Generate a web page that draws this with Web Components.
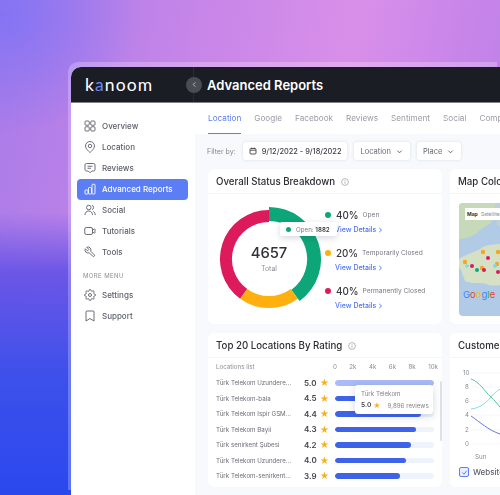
<!DOCTYPE html>
<html><head><meta charset="utf-8">
<style>
html,body{margin:0;padding:0;width:500px;height:495px;overflow:hidden}
body{font-family:Inter,"Liberation Sans",sans-serif;background:
 linear-gradient(180deg,rgba(100,80,230,0) 212px,rgba(104,84,230,.95) 272px,#3d50ea 375px,#2b48ee 495px),
 radial-gradient(140px 120px at 0px 15px,#8374f4 0%,rgba(131,116,244,0) 100%),
 linear-gradient(102deg,#a87be8 0%,#c886e8 35%,#d88fe9 60%,#c684e9 80%,#b27fe8 100%);
 padding:67px 0 0 71px;box-sizing:border-box}
</style></head><body>
<template id="t-nav">
<style>
:host{display:flex;align-items:center;gap:6px;height:21px;padding:0 7px;border-radius:4px;font-size:8px;color:#5b5f68;font-weight:500;white-space:nowrap}
:host([active]){background:#5c7ef5;color:#fff}
::slotted(svg){width:12px;height:12px;flex:none}
</style><slot name="icon"></slot><span><slot></slot></span>
</template>
<template id="t-shell">
<style>
:host{display:block;width:429px;height:428px;border-radius:10px 0 0 0;background:#fff;box-shadow:-3px -5px 0 0 rgba(255,255,255,.24);overflow:hidden;filter:blur(.4px)}
.top{height:36px;background:#1b1d24;display:flex;align-items:center;color:#fff;box-sizing:border-box;border-bottom:1px solid #7d8085}
.logo{width:123px;height:100%;display:flex;align-items:center;padding-left:14px;box-sizing:border-box;font-size:17.500px;letter-spacing:1.100px;font-family:Lato,sans-serif;border-right:1px solid #2a2c33}
.logo b{font-weight:400;color:#6a88f8}
.back{width:16px;height:16px;margin-left:-8px;position:relative;border-radius:50%;background:#4a4c53;display:flex;align-items:center;justify-content:center;margin-right:5px}
.title{font-size:13px;font-weight:600}
.body{display:flex;height:392px}
nav{width:124px;flex:none;padding:12.5px 7px 0 6px;box-sizing:border-box;display:flex;flex-direction:column}
.more{font-size:6px;line-height:9px;letter-spacing:.4px;color:#8a8d95;padding:8px 6px 4.5px}
main{flex:1;background:#f7f9fc;min-width:0}
</style>
<div class="top"><div class="logo"><span>k<b>a</b>noom</span></div><div class="back"><svg width="7" height="7" viewBox="0 0 8 8" fill="none" stroke="#b9babd" stroke-width="1.1"><path d="M5 1.500 2.500 4 5 6.500"/></svg></div><div class="title">Advanced Reports</div></div>
<div class="body"><nav><slot name="nav"></slot><div class="more">MORE MENU</div><slot name="more"></slot></nav><main><slot></slot></main></div>
</template>
<template id="t-tabs">
<style>
:host{display:flex;height:30.500px;background:#fff;gap:13px;padding-left:13px;font-size:8.200px;color:#9a9ca4;white-space:nowrap;overflow:hidden}
span{display:flex;align-items:center;box-sizing:border-box;height:30.500px}
span.on{color:#5c7ef5;border-bottom:1.500px solid #5c7ef5}
</style><span class="on">Location</span><span>Google</span><span>Facebook</span><span>Reviews</span><span>Sentiment</span><span>Social</span><span>Competitors</span>
</template>
<template id="t-filter">
<style>
:host{display:flex;align-items:center;gap:7px;height:35.500px;padding-left:12px;font-size:7px;color:#85888f;white-space:nowrap}
.b{display:flex;align-items:center;gap:5px;height:18px;background:#fff;border-radius:3px;box-shadow:0 0 3px rgba(30,40,80,.14);padding:0 7px 0 6px;color:#686b73;font-size:7.500px}
.d{color:#3d4048;font-weight:500;font-size:7.400px;padding-right:6px}
</style>
<span>Filter by:</span>
<div class="b d"><svg width="8" height="8" viewBox="0 0 8 8" fill="none" stroke="#444" stroke-width=".9"><rect x="1" y="1.500" width="6" height="5.500" rx="1"/><path d="M1 3.200h6M2.700.6v1.400M5.300.6v1.400"/></svg>9/12/2022 - 9/18/2022</div>
<div class="b">Location<svg width="7" height="7" viewBox="0 0 8 8" fill="none" stroke="#555" stroke-width="1"><path d="M1.500 3 4 5.500 6.500 3"/></svg></div>
<div class="b">Place<svg width="7" height="7" viewBox="0 0 8 8" fill="none" stroke="#555" stroke-width="1"><path d="M1.500 3 4 5.500 6.500 3"/></svg></div>
</template>
<template id="t-card">
<style>
:host{display:block;width:234px;background:#fff;border-radius:6px;flex:none;overflow:hidden}
.h{height:25px;padding-top:1px;display:flex;align-items:center;gap:6px;padding-left:8px;font-size:9.700px;font-weight:500;color:#2b2d33;white-space:nowrap;border-bottom:1px solid #f3f5f8;box-sizing:border-box}
</style>
<div class="h"><slot name="title"></slot><slot name="info"></slot></div><slot></slot>
</template>
<template id="t-donut">
<style>
:host{display:flex;height:130px;position:relative;font-size:6.600px;color:#75787f;padding-left:6px;gap:1px;box-sizing:border-box}
.w{position:relative;width:110px;height:110px;margin-top:10px;flex:none}
svg.d{display:block}
.c{position:absolute;inset:0;display:flex;flex-direction:column;align-items:center;justify-content:center}
.n{font-size:14.800px;line-height:17px;color:#30323a;font-weight:500}
.t{font-size:7px;line-height:9px;color:#8d9098;margin-top:2px}
.ls{padding-top:14px}
.l{height:38px;white-space:nowrap}
.r{display:flex;align-items:center;height:14px}
.dot{width:6px;height:6px;border-radius:50%;flex:none}
.p{font-size:9.800px;font-weight:500;color:#35373e;margin:0 4px 0 5px}
.v{display:flex;align-items:center;gap:2px;color:#4f72ef;font-size:7px;font-weight:500;height:14px;padding-left:10px;margin-top:.5px}
.tip{position:absolute;left:72px;top:28px;height:14px;width:57px;background:#fff;box-shadow:0 2px 6px rgba(30,40,80,.18);border-radius:2px;display:flex;align-items:center;gap:3px;padding-left:6px;box-sizing:border-box;font-size:6.200px;white-space:nowrap}
.tip b{font-weight:600;color:#44464e}
</style>
<div class="w"><svg class="d" width="110" height="110" viewBox="0 0 110 110">
<path d="M55 12A43 43 0 0 0 29.700 89.800" fill="none" stroke="#dd1a5b" stroke-width="12"/>
<path d="M29.700 89.800A43 43 0 0 0 80.300 89.800" fill="none" stroke="#ffaf0e" stroke-width="12"/>
<path d="M55 3A52 52 0 0 1 85.600 97.100L77.400 85.800A38 38 0 0 0 55 17Z" fill="#0da678"/>
</svg>
<div class="c"><div class="n">4657</div><div class="t">Total</div></div></div>
<div class="ls">
<div class="l"><div class="r"><i class="dot" style="background:#0da678"></i><span class="p">40%</span><span>Open</span></div><div class="v">View Details<svg width="5" height="6" viewBox="0 0 5 6" fill="none" stroke="#4f72ef" stroke-width=".9"><path d="M1.200.8 3.500 3 1.200 5.200"/></svg></div></div>
<div class="l"><div class="r"><i class="dot" style="background:#ffaf0e"></i><span class="p">20%</span><span>Temporarily Closed</span></div><div class="v">View Details<svg width="5" height="6" viewBox="0 0 5 6" fill="none" stroke="#4f72ef" stroke-width=".9"><path d="M1.200.8 3.500 3 1.200 5.200"/></svg></div></div>
<div class="l"><div class="r"><i class="dot" style="background:#dd1a5b"></i><span class="p">40%</span><span>Permanently Closed</span></div><div class="v">View Details<svg width="5" height="6" viewBox="0 0 5 6" fill="none" stroke="#4f72ef" stroke-width=".9"><path d="M1.200.8 3.500 3 1.200 5.200"/></svg></div></div>
</div>
<div class="tip"><i class="dot" style="background:#0da678;width:5px;height:5px;margin-right:2px"></i><span>Open: <b>1882</b></span></div>
</template>
<template id="t-rank">
<style>
:host{display:block;position:relative;height:129px;font-size:6.200px;color:#6b6e76;padding-left:8px;box-sizing:border-box}
.row{display:grid;grid-template-columns:88px 14px 17px 99px;align-items:center;height:15.500px;white-space:nowrap}
.hd{height:17px;display:grid;grid-template-columns:117px 105px;align-items:center;color:#8a8d95;font-size:6.200px}
.ax{display:flex;justify-content:space-between}
.s{font-size:8px;font-weight:600;color:#44464e}
.st{color:#f6b01e;font-size:9px;line-height:1;text-align:center;padding-right:4px}
.bar{height:5.500px;background:#eff3fc;border-radius:3px;overflow:hidden}
.bar i{display:block;height:100%;background:#3f63e6;border-radius:3px}
.tip{position:absolute;left:147px;top:27px;width:78px;height:29px;background:#fff;box-shadow:0 2px 8px rgba(30,40,80,.18);border-radius:3px;padding:5px 6px;box-sizing:border-box;color:#80838b;font-size:6.200px;white-space:nowrap}
.tip div{display:flex;align-items:center;gap:2px;margin-top:4px}
.sb{position:absolute;right:0;top:23px;width:2px;height:60px;background:#dde1e8;border-radius:1px}
</style>
<div class="hd"><span>Locations list</span><div class="ax"><span>0</span><span>2k</span><span>4k</span><span>6k</span><span>8k</span><span>10k</span></div></div>
<div class="row"><span>Türk Telekom Uzundere...</span><span class="s">5.0</span><span class="st">★</span><div class="bar"><i style="width:100%;background:#a9baf6"></i></div></div>
<div class="row"><span>Türk Telekom-bala</span><span class="s">4.5</span><span class="st">★</span><div class="bar"><i style="width:92%"></i></div></div>
<div class="row"><span>Türk Telekom Ispir GSM...</span><span class="s">4.4</span><span class="st">★</span><div class="bar"><i style="width:87%"></i></div></div>
<div class="row"><span>Türk Telekom Bayii</span><span class="s">4.3</span><span class="st">★</span><div class="bar"><i style="width:82%"></i></div></div>
<div class="row"><span>Türk senirkent Şubesi</span><span class="s">4.2</span><span class="st">★</span><div class="bar"><i style="width:77%"></i></div></div>
<div class="row"><span>Türk Telekom Uzundere...</span><span class="s">4.0</span><span class="st">★</span><div class="bar"><i style="width:72%"></i></div></div>
<div class="row"><span>Türk Telekom-senirkent...</span><span class="s">3.9</span><span class="st">★</span><div class="bar"><i style="width:66%"></i></div></div>
<div class="sb"></div>
<div class="tip">Türk Telekom<div><span class="s" style="font-size:6.600px">5.0</span><span class="st" style="font-size:7px;padding:0">★</span><span style="margin-left:5px">9,896 reviews</span></div></div>
</template>
<template id="t-map">
<style>
:host{display:block;height:130px;padding:9px 0 0 9px;box-sizing:border-box}
svg{display:block;border-radius:4px}
text{font-family:Inter,sans-serif}
</style>
<svg width="60" height="113" viewBox="0 0 60 113">
<rect width="60" height="113" fill="#b1cbe6"/>
<path d="M0 0H36V14C32 22 24 24 20 28 14 34 6 36 0 36Z" fill="#c6d9b8"/>
<path d="M36 0H60V26C52 28 44 26 38 22Z" fill="#bfd0d8"/>
<path d="M0 56C8 50 16 50 24 44 34 40 46 42 60 40V78C48 80 38 84 30 82 22 78 14 82 6 78 4 72 2 66 0 64Z" fill="#d6e0c4"/>
<rect x="6" y="5" width="54" height="12" fill="#fff"/>
<text x="8" y="13" font-size="5" font-weight="700" fill="#333">Map</text>
<text x="22" y="13" font-size="5" fill="#8a8a8a">Satellite</text>
<g fill="#f5a623"><circle cx="24" cy="49" r="2.200"/><circle cx="39" cy="49" r="2.200"/><circle cx="6" cy="59" r="2.200"/><circle cx="23" cy="65" r="2.200"/><circle cx="38" cy="61" r="2.200"/></g>
<g fill="#d81b60"><circle cx="29" cy="55" r="2"/><circle cx="13" cy="63" r="2"/><circle cx="25" cy="67" r="2"/><circle cx="39" cy="69" r="2"/></g>
<circle cx="18" cy="67" r="2" fill="#0da678"/><circle cx="36" cy="63" r="2" fill="#7fd8e8"/><circle cx="8" cy="63" r="1.800" fill="#7fd8e8"/>
<text x="4" y="95" font-size="9.500" font-family="Liberation Sans"><tspan fill="#4285f4">G</tspan><tspan fill="#ea4335">o</tspan><tspan fill="#fbbc05">o</tspan><tspan fill="#4285f4">g</tspan><tspan fill="#34a853">l</tspan><tspan fill="#ea4335">e</tspan></text>
</svg>
</template>
<template id="t-line">
<style>
:host{display:block;height:129px;font-size:6.200px;color:#8a8d95}
svg{display:block}
text{font-family:Inter,sans-serif;font-size:6.200px;fill:#8a8d95}
.k{display:flex;align-items:center;gap:4px;padding:2px 0 0 9px;color:#5d6068;font-size:8px;font-weight:500;white-space:nowrap}
.c{width:10px;height:10px;border:1px solid #5c7ef5;border-radius:2px;background:#e8edff;box-sizing:border-box;display:flex;align-items:center;justify-content:center;flex:none}
</style>
<svg width="60" height="107" viewBox="0 0 60 107">
<text x="13" y="17">10</text><text x="15" y="31">8</text><text x="15" y="45">6</text><text x="15" y="59">4</text><text x="15" y="74">2</text><text x="15" y="88">0</text>
<path stroke="#f0f2f6" stroke-width=".7" d="M22 15H60M22 29H60M22 43H60M22 57H60M22 72H60M22 86H60"/>
<path d="M21 21C30 24 34 33 41 39S52 54 60 58" fill="none" stroke="#57c7a0" stroke-width="1"/>
<path d="M21 51C30 50 36 45 41 39S50 30 60 28" fill="none" stroke="#79dde0" stroke-width="1"/>
<path d="M21 58C30 64 38 72 50 76S56 78 60 78" fill="none" stroke="#6277ea" stroke-width="1"/>
<text x="25" y="101">Sun</text>
</svg>
<div class="k"><div class="c"><svg width="7" height="7" viewBox="0 0 8 8" fill="none" stroke="#5c7ef5" stroke-width="1.100"><path d="M1.500 4 3.400 6 6.500 2"/></svg></div>Website</div>
</template>
<kn-shell>
<kn-nav slot="nav"><svg slot="icon" viewBox="0 0 24 24" fill="none" stroke="#5b5f68" stroke-width="1.800"><rect x="2" y="2" width="8.500" height="8.500" rx="2"/><rect x="13.500" y="2" width="8.500" height="8.500" rx="2"/><rect x="2" y="13.500" width="8.500" height="8.500" rx="2"/><rect x="13.500" y="13.500" width="8.500" height="8.500" rx="2"/></svg>Overview</kn-nav>
<kn-nav slot="nav"><svg slot="icon" viewBox="0 0 24 24" fill="none" stroke="#5b5f68" stroke-width="1.800"><path d="M12 23S3 16 3 10a9 9 0 0 1 18 0c0 6-9 13-9 13Z"/><circle cx="12" cy="10" r="3.500"/></svg>Location</kn-nav>
<kn-nav slot="nav"><svg slot="icon" viewBox="0 0 24 24" fill="none" stroke="#5b5f68" stroke-width="1.800"><path d="M5 3h14a3 3 0 0 1 3 3v9a3 3 0 0 1-3 3h-3.500L12 21.500 8.500 18H5a3 3 0 0 1-3-3V6a3 3 0 0 1 3-3Z"/><path d="M7 8.500h10M7 12.500h7"/></svg>Reviews</kn-nav>
<kn-nav slot="nav" active><svg slot="icon" viewBox="0 0 24 24" fill="none" stroke="#fff" stroke-width="1.800"><rect x="2" y="14" width="6" height="8" rx="1.500"/><rect x="9" y="9" width="6" height="13" rx="1.500"/><rect x="16" y="2.500" width="6" height="19.500" rx="1.500"/></svg>Advanced Reports</kn-nav>
<kn-nav slot="nav"><svg slot="icon" viewBox="0 0 24 24" fill="none" stroke="#5b5f68" stroke-width="1.800"><circle cx="9.500" cy="7" r="4.500"/><path d="M2 22c0-5 3-8 7.500-8s7.500 3 7.500 8M16 2.700a4.500 4.500 0 0 1 0 8.600M18.500 14.800C21 16 22.500 18.500 22.500 22"/></svg>Social</kn-nav>
<kn-nav slot="nav"><svg slot="icon" viewBox="0 0 24 24" fill="none" stroke="#5b5f68" stroke-width="1.800"><rect x="1.500" y="5" width="15.500" height="14" rx="3"/><path d="M17 10l3.500-2a1 1 0 0 1 1.500.9v6.200a1 1 0 0 1-1.500.9L17 14"/></svg>Tutorials</kn-nav>
<kn-nav slot="nav"><svg slot="icon" viewBox="0 0 24 24" fill="none" stroke="#5b5f68" stroke-width="1.800"><path transform="translate(24 0) scale(-1 1)" d="M14.700 6.300a1 1 0 0 0 0 1.400l1.600 1.600a1 1 0 0 0 1.400 0l3.770-3.770a6 6 0 0 1-7.940 7.940l-6.910 6.910a2.120 2.120 0 0 1-3-3l6.910-6.910a6 6 0 0 1 7.940-7.940l-3.760 3.760z"/></svg>Tools</kn-nav>
<kn-nav slot="more"><svg slot="icon" viewBox="0 0 24 24" fill="none" stroke="#5b5f68" stroke-width="1.800"><circle cx="12" cy="12" r="3"/><path d="M19.400 15a1.650 1.650 0 0 0 .33 1.820l.06.06a2 2 0 0 1 0 2.830 2 2 0 0 1-2.830 0l-.06-.06a1.650 1.650 0 0 0-1.820-.33 1.650 1.650 0 0 0-1 1.510V21a2 2 0 0 1-2 2 2 2 0 0 1-2-2v-.09A1.650 1.650 0 0 0 9 19.400a1.650 1.650 0 0 0-1.820.33l-.06.06a2 2 0 0 1-2.830 0 2 2 0 0 1 0-2.830l.06-.06a1.650 1.650 0 0 0 .33-1.820 1.650 1.650 0 0 0-1.510-1H3a2 2 0 0 1-2-2 2 2 0 0 1 2-2h.09A1.650 1.650 0 0 0 4.600 9a1.650 1.650 0 0 0-.33-1.820l-.06-.06a2 2 0 0 1 0-2.830 2 2 0 0 1 2.830 0l.06.06a1.650 1.650 0 0 0 1.820.33H9a1.650 1.650 0 0 0 1-1.510V3a2 2 0 0 1 2-2 2 2 0 0 1 2 2v.09a1.650 1.650 0 0 0 1 1.510 1.650 1.650 0 0 0 1.820-.33l.06-.06a2 2 0 0 1 2.830 0 2 2 0 0 1 0 2.830l-.06.06a1.650 1.650 0 0 0-.33 1.820V9a1.650 1.650 0 0 0 1.510 1H21a2 2 0 0 1 2 2 2 2 0 0 1-2 2h-.09a1.650 1.650 0 0 0-1.510 1z"/></svg>Settings</kn-nav>
<kn-nav slot="more"><svg slot="icon" viewBox="0 0 24 24" fill="none" stroke="#5b5f68" stroke-width="1.800"><path d="M6 2h12a2 2 0 0 1 2 2v18l-8-5-8 5V4a2 2 0 0 1 2-2Z"/></svg>Support</kn-nav>
<kn-tabs></kn-tabs>
<kn-filter></kn-filter>
<kn-row style="display:flex;gap:8px;padding-left:13px">
<kn-card><span slot="title">Overall Status Breakdown</span><svg slot="info" width="8" height="8" viewBox="0 0 8 8" fill="none" stroke="#999" stroke-width=".7"><circle cx="4" cy="4" r="3.400"/><path d="M4 3.500v2.300M4 2v.8"/></svg><kn-donut></kn-donut></kn-card>
<kn-card><span slot="title">Map Color Coding</span><kn-map></kn-map></kn-card>
</kn-row>
<kn-row style="display:flex;gap:8px;padding:9px 0 0 13px">
<kn-card><span slot="title">Top 20 Locations By Rating</span><svg slot="info" width="8" height="8" viewBox="0 0 8 8" fill="none" stroke="#999" stroke-width=".7"><circle cx="4" cy="4" r="3.400"/><path d="M4 3.500v2.300M4 2v.8"/></svg><kn-rank></kn-rank></kn-card>
<kn-card><span slot="title">Customer Actions</span><kn-line></kn-line></kn-card>
</kn-row>
</kn-shell>
<script>
for (const [tag,id] of [['kn-shell','t-shell'],['kn-nav','t-nav'],['kn-tabs','t-tabs'],['kn-filter','t-filter'],['kn-card','t-card'],['kn-donut','t-donut'],['kn-rank','t-rank'],['kn-map','t-map'],['kn-line','t-line']]) {
  customElements.define(tag,class extends HTMLElement{constructor(){super();this.attachShadow({mode:'open'}).appendChild(document.getElementById(id).content.cloneNode(true));}});
}
customElements.define('kn-row',class extends HTMLElement{constructor(){super();this.attachShadow({mode:'open'}).innerHTML='<slot></slot>';}});
</script>
</body></html>
